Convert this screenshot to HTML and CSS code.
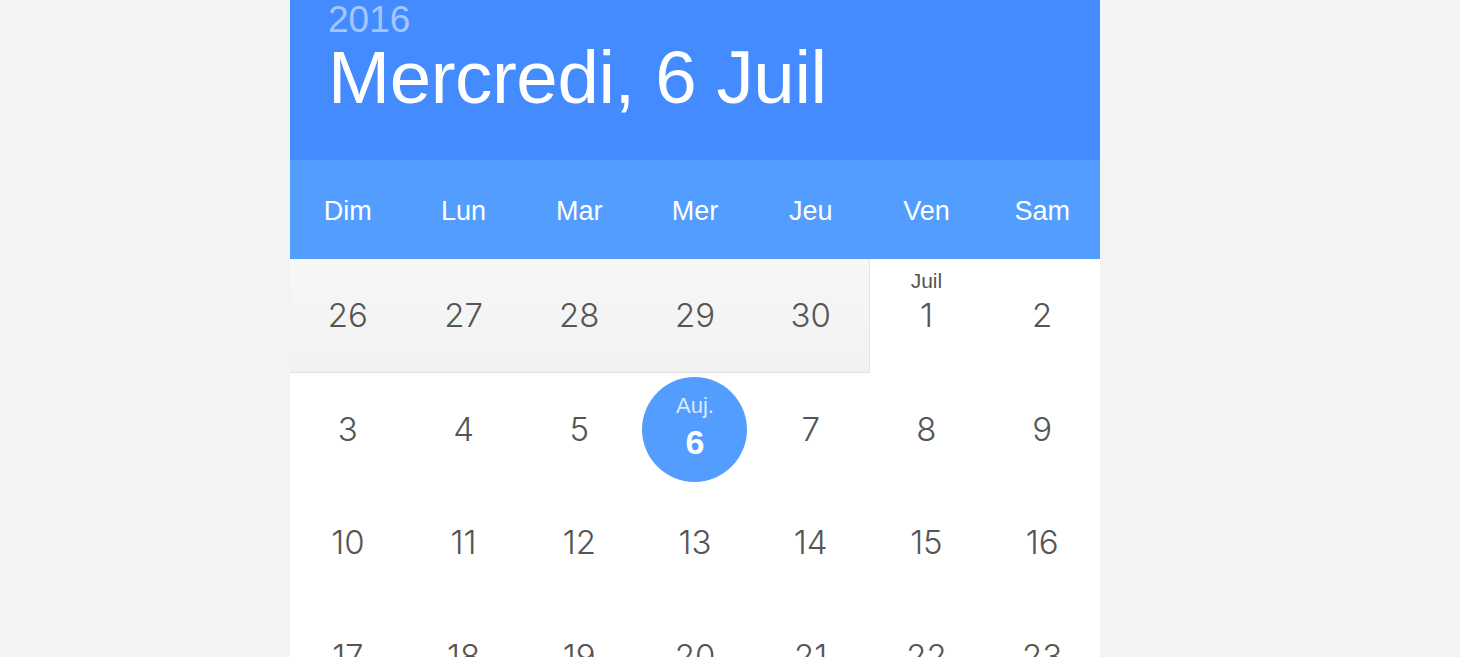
FILE: index.html
```html
<!DOCTYPE html>
<html lang="fr">
<head>
<meta charset="utf-8">
<title>Calendrier</title>
<link rel="stylesheet" href="styles.css">
</head>
<body>
<div class="card">
  <header class="head">
    <div class="year">2016</div>
    <div class="date">Mercredi, 6 Juil</div>
  </header>
  <div class="weekdays">
    <span>Dim</span><span>Lun</span><span>Mar</span><span>Mer</span><span>Jeu</span><span>Ven</span><span>Sam</span>
  </div>
  <div class="grid">
    <div class="prev">
      <div class="cell"><span class="num">26</span></div>
      <div class="cell"><span class="num">27</span></div>
      <div class="cell"><span class="num">28</span></div>
      <div class="cell"><span class="num">29</span></div>
      <div class="cell"><span class="num">30</span></div>
    </div>
    <div class="cell"><span class="month">Juil</span><span class="num">1</span></div>
    <div class="cell"><span class="num">2</span></div>

    <div class="cell"><span class="num">3</span></div>
    <div class="cell"><span class="num">4</span></div>
    <div class="cell"><span class="num">5</span></div>
    <div class="cell"><div class="today"><span class="auj">Auj.</span><span class="tnum">6</span></div></div>
    <div class="cell"><span class="num">7</span></div>
    <div class="cell"><span class="num">8</span></div>
    <div class="cell"><span class="num">9</span></div>

    <div class="cell"><span class="num">10</span></div>
    <div class="cell"><span class="num">11</span></div>
    <div class="cell"><span class="num">12</span></div>
    <div class="cell"><span class="num">13</span></div>
    <div class="cell"><span class="num">14</span></div>
    <div class="cell"><span class="num">15</span></div>
    <div class="cell"><span class="num">16</span></div>

    <div class="cell"><span class="num">17</span></div>
    <div class="cell"><span class="num">18</span></div>
    <div class="cell"><span class="num">19</span></div>
    <div class="cell"><span class="num">20</span></div>
    <div class="cell"><span class="num">21</span></div>
    <div class="cell"><span class="num">22</span></div>
    <div class="cell"><span class="num">23</span></div>
  </div>
</div>
</body>
</html>
```
FILE: styles.css
```css
html, body {
  margin: 0;
  padding: 0;
  height: 100%;
  overflow: hidden;
}
body {
  background: #f3f3f3;
  font-family: "Liberation Sans", Arial, sans-serif;
}
.card {
  width: 810px;
  margin-left: 290px;
  background: #ffffff;
  height: 100%;
}
.head {
  background: #448bff;
  height: 160px;
  box-sizing: border-box;
  padding: 0 0 0 38px;
  color: #fff;
  display: flex;
  flex-direction: column;
}
.year {
  font-size: 37px;
  line-height: 37px;
  margin-top: 1px;
  color: #a3c6ff;
}
.date {
  font-size: 74.5px;
  line-height: 75px;
  margin-top: 2px;
  letter-spacing: -0.4px;
}
.weekdays {
  background: #539dff;
  height: 99px;
  display: grid;
  grid-template-columns: repeat(7, 1fr);
  align-items: center;
  color: #fff;
  font-size: 27px;
  text-align: center;
}
.weekdays span {
  padding-top: 4px;
}
.grid {
  display: grid;
  grid-template-columns: repeat(7, 1fr);
  grid-auto-rows: 113.5px;
  color: #555;
}
.prev {
  grid-column: 1 / span 5;
  display: grid;
  grid-template-columns: repeat(5, 1fr);
  background: linear-gradient(#f7f7f7, #f2f2f2);
  border-bottom: 1px solid #e2e2e2;
  border-right: 1px solid #e6e6e6;
  margin-right: -1px;
}
.cell {
  position: relative;
  display: flex;
  align-items: center;
  justify-content: center;
}
.num {
  font-family: "Inter", "Liberation Sans", sans-serif;
  font-weight: 300;
  font-size: 33px;
  line-height: 1;
}
.month {
  position: absolute;
  top: 10px;
  left: 0;
  right: 0;
  text-align: center;
  font-size: 21px;
  color: #555;
}
.today {
  width: 105px;
  height: 105px;
  border-radius: 50%;
  background: #539dff;
  color: #fff;
  display: flex;
  flex-direction: column;
  align-items: center;
  justify-content: center;
}
.auj {
  font-size: 22px;
  line-height: 24px;
  color: #dbe9ff;
  margin-top: -4px;
}
.tnum {
  font-size: 34px;
  font-weight: bold;
  line-height: 36px;
  margin-top: 6px;
}
```
